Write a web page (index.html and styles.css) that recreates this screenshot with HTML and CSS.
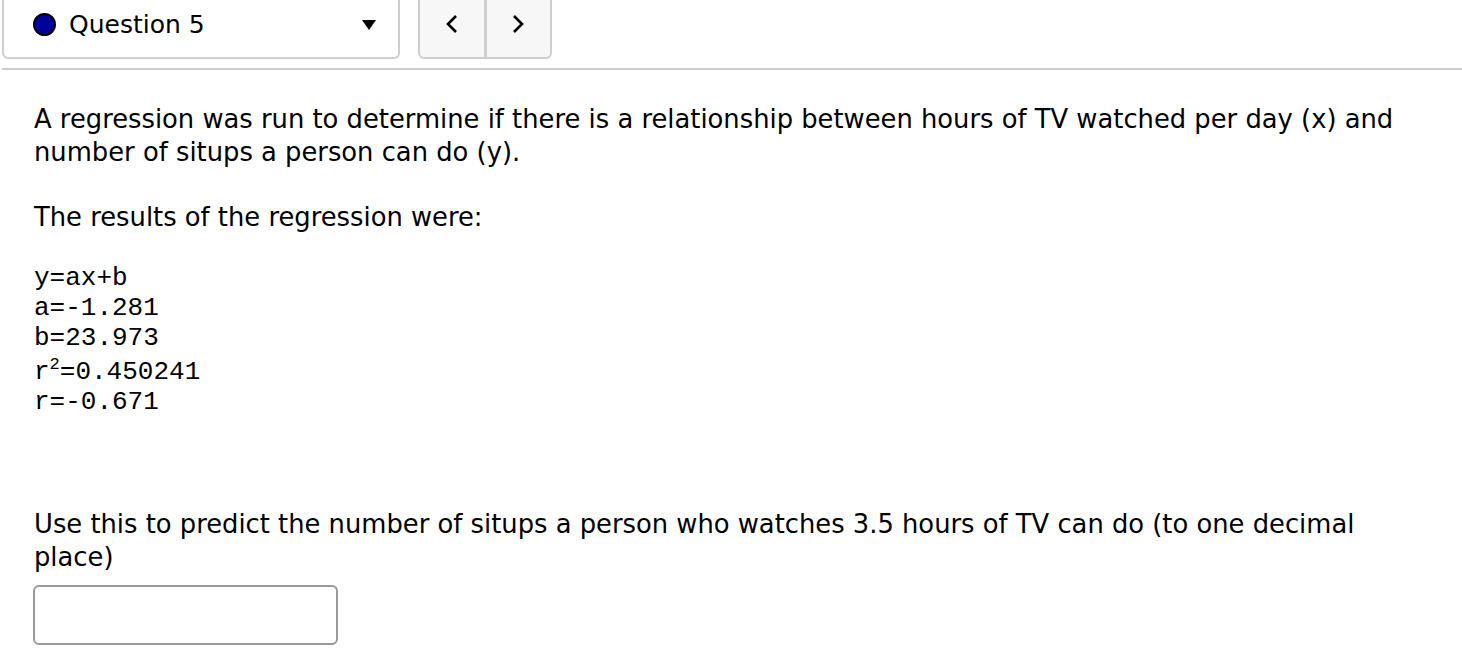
FILE: index.html
```html
<!DOCTYPE html>
<html>
<head>
<meta charset="utf-8">
<link rel="stylesheet" href="styles.css">
</head>
<body>
<div class="header">
  <div class="qselect">
    <span class="dot"></span>
    <span class="qlabel">Question 5</span>
    <svg class="caret" width="14" height="10" viewBox="0 0 14 10"><polygon points="0,0 14,0 7,10" fill="#000"/></svg>
  </div>
  <div class="qnav">
    <div class="navbtn">
      <svg width="14" height="20" viewBox="0 0 14 20"><polyline points="11,2 3,10 11,18" fill="none" stroke="#000" stroke-width="2.6"/></svg>
    </div>
    <div class="navbtn">
      <svg width="14" height="20" viewBox="0 0 14 20"><polyline points="3,2 11,10 3,18" fill="none" stroke="#000" stroke-width="2.6"/></svg>
    </div>
  </div>
</div>
<div class="rule"></div>
<div class="content">
  <p class="para first">A regression was run to determine if there is a relationship between hours of TV watched per day (x) and number of situps a person can do (y).</p>
  <p class="para">The results of the regression were:</p>
  <div class="mono">
    <div class="mline">y=ax+b</div>
    <div class="mline">a=-1.281</div>
    <div class="mline">b=23.973</div>
    <div class="mline tall">r<sup class="sup">2</sup>=0.450241</div>
    <div class="mline">r=-0.671</div>
  </div>
  <p class="para ask">Use this to predict the number of situps a person who watches 3.5 hours of TV can do (to one decimal place)</p>
  <div class="answer"></div>
</div>
</body>
</html>
```
FILE: styles.css
```css
html, body {
  margin: 0;
  padding: 0;
  background: #fff;
}
body {
  font-family: "DejaVu Sans", Verdana, sans-serif;
  color: #000;
  overflow: hidden;
}
.header {
  display: flex;
  align-items: flex-end;
  gap: 18px;
  margin-top: -14px;
  padding-left: 2px;
}
.qselect {
  box-sizing: border-box;
  width: 398px;
  height: 73px;
  border: 2px solid #cfcfcf;
  border-radius: 6px;
  display: flex;
  align-items: center;
  padding: 3px 0 0 29px;
}
.dot {
  box-sizing: border-box;
  width: 23px;
  height: 23px;
  border-radius: 50%;
  background: #00009c;
  border: 2px solid #000;
  flex: none;
}
.qlabel {
  font-size: 25px;
  margin-left: 13px;
  flex: 1;
}
.caret {
  margin-right: 22px;
  margin-top: 2px;
}
.qnav {
  box-sizing: border-box;
  width: 134px;
  height: 73px;
  border: 2px solid #cfcfcf;
  border-radius: 6px;
  background: #f7f7f7;
  display: flex;
  padding-top: 3px;
}
.navbtn {
  flex: 1;
  display: flex;
  align-items: center;
  justify-content: center;
}
.navbtn + .navbtn {
  border-left: 3px solid #cfcfcf;
}
.rule {
  height: 2px;
  background: #cccccc;
  margin: 9px 0 0 2px;
}
.content {
  padding: 0 30px 0 34px;
}
.para {
  font-size: 25.8px;
  line-height: 33px;
  margin: 32px 0 0 0;
}
.para.first {
  margin-top: 33px;
}
.mono {
  font-family: "Liberation Mono", "Courier New", monospace;
  font-size: 26px;
  line-height: 30px;
  margin-top: 29px;
}
.mline.tall {
  padding-top: 4px;
}
.sup {
  font-size: 17px;
  line-height: 0;
  vertical-align: 10px;
}
.ask {
  margin-top: 91px;
}
.answer {
  box-sizing: border-box;
  width: 305px;
  height: 60px;
  border: 2px solid #9a9a9a;
  border-radius: 6px;
  margin: 11px 0 0 -1px;
}
```
